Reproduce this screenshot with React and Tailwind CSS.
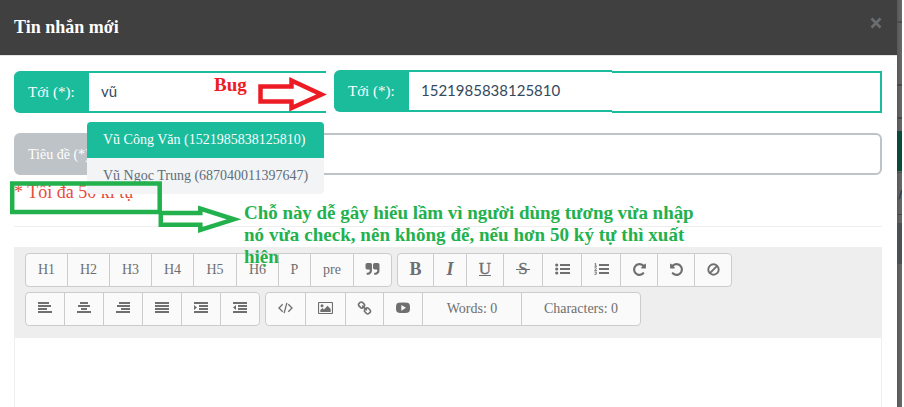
import React from "react";

const serif = "font-['Liberation_Serif',serif]";

const REPEAT =
  "M1664 256v448q0 26-19 45t-45 19h-448q-42 0-59-40-17-39 14-69l138-138q-148-137-349-137-104 0-198.5 40.5t-163.5 109.5-109.5 163.5-40.5 198.5 40.5 198.5 109.5 163.5 163.5 109.5 198.5 40.5q119 0 225-52t179-147q7-10 23-12 15 0 25 9l137 138q9 8 9.5 20.5t-7.5 22.5q-109 132-264 204.5t-327 72.5q-156 0-298-61t-245-164-164-245-61-298 61-298 164-245 245-164 298-61q147 0 284.5 55.5t244.5 156.5l130-129q29-31 70-14 39 17 39 59z";
const QUOTE =
  "M832 320v704q0 104-40.500 198.500t-109.500 163.500-163.500 109.500-198.500 40.500h-64q-26 0-45-19t-19-45v-128q0-26 19-45t45-19h64q106 0 181-75t75-181v-32q0-40-28-68t-68-28h-224q-80 0-136-56t-56-136v-384q0-80 56-136t136-56h384q80 0 136 56t56 136zm896 0v704q0 104-40.500 198.500t-109.500 163.500-163.500 109.500-198.500 40.500h-64q-26 0-45-19t-19-45v-128q0-26 19-45t45-19h64q106 0 181-75t75-181v-32q0-40-28-68t-68-28h-224q-80 0-136-56t-56-136v-384q0-80 56-136t136-56h384q80 0 136 56t56 136z";
const LINK =
  "M1520 1216q0-40-28-68l-208-208q-28-28-68-28-42 0-72 32 3 3 19 18.500t21.500 21.500 15 19 13 25.500 3.500 27.500q0 40-28 68t-68 28q-15 0-27.500-3.500t-25.500-13-19-15-21.500-21.500-18.500-19q-33 31-33 73 0 40 28 68l206 207q27 27 68 27 40 0 68-26l147-146q28-28 28-67zm-703-705q0-40-28-68l-206-207q-28-28-68-28-39 0-68 27l-147 146q-28 28-28 67 0 40 28 68l208 208q27 27 68 27 42 0 72-31-3-3-19-18.500t-21.500-21.500-15-19-13-25.500-3.500-27.500q0-40 28-68t68-28q15 0 27.500 3.500t25.500 13 19 15 21.500 21.500 18.500 19q33-31 33-73zm895 705q0 120-85 203l-147 146q-83 83-203 83-121 0-204-85l-206-207q-83-83-83-203 0-123 88-209l-88-88q-86 88-208 88-120 0-204-84l-208-208q-84-84-84-204t85-203l147-146q83-83 203-83 121 0 204 85l206 207q83 83 83 203 0 123-88 209l88 88q86-88 208-88 120 0 204 84l208 208q84 84 84 204z";

function Glyph({ d, flip }) {
  return (
    <svg viewBox="0 0 1792 1792" className={flip ? "size-[15px] -scale-x-100" : "size-[15px]"} fill="currentColor">
      <path d={d} />
    </svg>
  );
}

// Four stacked bars, each given as [x, width] on a 14px grid.
function Bars({ rows, children }) {
  return (
    <svg width="14" height="12" viewBox="0 0 14 12" fill="currentColor">
      {rows.map(([x, w], i) => (
        <rect key={i} x={x} y={i * 3} width={w} height="2" />
      ))}
      {children}
    </svg>
  );
}

function ListIcon({ ordered }) {
  return (
    <svg width="15" height="12" viewBox="0 0 15 12" fill="currentColor">
      {[1, 5, 9].map((y) => (
        <rect key={y} x="5" y={y} width="10" height="2" />
      ))}
      {ordered ? (
        <g fill="none" stroke="currentColor" strokeWidth="0.9">
          <path d="M0.500 0.900L1.700 0.400V3.200M0.400 3.200H3" />
          <path d="M0.500 5Q2.600 4 2.400 5.300Q2 6.300 0.600 7.400H3" />
          <path d="M0.500 9H2.600L1.500 10.100Q3 10.200 2.400 11.200Q1.500 11.800 0.400 11.400" />
        </g>
      ) : (
        [2, 6, 10].map((y) => <circle key={y} cx="1.700" cy={y} r="1.600" />)
      )}
    </svg>
  );
}

const ban = (
  <svg width="13" height="13" viewBox="0 0 13 13" fill="none" stroke="currentColor" strokeWidth="1.900">
    <circle cx="6.500" cy="6.500" r="5.200" />
    <path d="M2.900 10.100L10.100 2.900" />
  </svg>
);

const code = (
  <svg width="15" height="12" viewBox="0 0 15 12" fill="none" stroke="currentColor" strokeWidth="1.300">
    <path d="M4.700 2.300L1 6L4.700 9.700M10.300 2.300L14 6L10.300 9.700M8.900 0.800L6.100 11.200" />
  </svg>
);

const picture = (
  <svg width="15" height="12" viewBox="0 0 15 12">
    <rect x="0.500" y="0.500" width="14" height="11" rx="0.800" fill="none" stroke="currentColor" strokeWidth="1.200" />
    <circle cx="4" cy="3.800" r="1.500" fill="currentColor" />
    <path d="M2.300 9.900V8.100L4.500 6L6 7.400L9.500 3.700L12.700 6.900V9.900Z" fill="currentColor" />
  </svg>
);

const video = (
  <svg width="14" height="12" viewBox="0 0 14 12" fill="currentColor" fillRule="evenodd">
    <path d="M2.500 0.800Q7 0.300 11.500 0.800Q13.500 1 13.800 3Q14.200 6 13.800 8.500Q13.500 10.600 11.500 10.800Q7 11.300 2.500 10.800Q0.500 10.600 0.200 8.500Q-0.200 6 0.200 3Q0.500 1 2.500 0.800ZM5.300 3V8.700L10 5.800Z" />
  </svg>
);

const strike = (
  <span className="relative text-[17px] [-webkit-text-stroke:0.3px]">
    S
    <span className="absolute top-[13px] -left-[2px] h-px w-[14px] bg-current" />
  </span>
);

const row1 = [
  [
    ["w-[43px]", "H1"],
    ["w-[43px]", "H2"],
    ["w-[43px]", "H3"],
    ["w-[43px]", "H4"],
    ["w-[44px]", "H5"],
    ["w-[43px]", "H6"],
    ["w-[33px]", "P"],
    ["w-[44px]", "pre"],
    ["w-[39px]", <Glyph d={QUOTE} />],
  ],
  [
    ["w-[37px]", <b className="text-[18px]">B</b>],
    ["w-[34px]", <b className="text-[18px] italic">I</b>],
    ["w-[38px]", <span className="border-b border-current text-[17px] leading-[13px] [-webkit-text-stroke:0.3px]">U</span>],
    ["w-[40px]", strike],
    ["w-[40px]", <ListIcon />],
    ["w-[40px]", <ListIcon ordered />],
    ["w-[38px]", <Glyph d={REPEAT} />],
    ["w-[38px]", <Glyph d={REPEAT} flip />],
    ["w-[38px]", ban],
  ],
];

const row2 = [
  [
    ["w-[40px]", <Bars rows={[[0, 11], [0, 13], [0, 9], [0, 14]]} />],
    ["w-[40px]", <Bars rows={[[3, 8], [1, 12], [4, 6], [0, 14]]} />],
    ["w-[40px]", <Bars rows={[[3, 11], [1, 13], [5, 9], [0, 14]]} />],
    ["w-[40px]", <Bars rows={[[0, 14], [0, 14], [0, 14], [0, 14]]} />],
    ["w-[40px]", <Bars rows={[[0, 14], [5, 9], [5, 9], [0, 14]]}><path d="M0 3V8L3 5.500Z" /></Bars>],
    ["w-[40px]", <Bars rows={[[0, 14], [5, 9], [5, 9], [0, 14]]}><path d="M3 3V8L0 5.500Z" /></Bars>],
  ],
  [
    ["w-[41px]", code],
    ["w-[41px]", picture],
    ["w-[39px]", <Glyph d={LINK} />],
    ["w-[40px]", video],
    ["w-[100px]", "Words: 0"],
    ["w-[120px]", "Characters: 0"],
  ],
];

function ToolRow({ groups }) {
  return (
    <div className="flex gap-[5px]">
      {groups.map((group, g) => (
        <div key={g} className="flex">
          {group.map(([width, content], i) => (
            <button
              key={i}
              className={`${width} flex h-[34px] shrink-0 items-center justify-center border border-[#ccc] bg-[#fafafa] pb-[2px] whitespace-nowrap text-[#6f6f6f] not-first:-ml-px first:rounded-l last:rounded-r`}
            >
              {content}
            </button>
          ))}
        </div>
      ))}
    </div>
  );
}

function Label({ children, className }) {
  return (
    <span className={`${className} flex w-[75px] shrink-0 items-center rounded-l-md whitespace-nowrap text-white`}>
      {children}
    </span>
  );
}

export default function App() {
  return (
    <div className={`${serif} relative flex h-[407px] w-[904px] overflow-hidden bg-white text-[14px]`}>
      <div className="flex w-[897px] shrink-0 flex-col">
        <header className="flex h-[55px] shrink-0 items-center justify-between bg-[#404040] pr-[15px] pl-[14px]">
          <h1 className="text-[18px] font-bold text-white">Tin nhắn mới</h1>
          <svg width="12" height="12" viewBox="0 0 12 12" className="mb-[9px]" stroke="#6b6e70" strokeWidth="2.600">
            <path d="M1.500 1.500L10.500 10.500M10.500 1.500L1.500 10.500" />
          </svg>
        </header>
        <main className="flex flex-1 flex-col border-t border-[#e5e5e5] pr-[15px] pl-[14px]">
          <div className="mt-[15px] flex h-[42px] shrink-0 font-['Lato',sans-serif] text-[15px] text-[#34495e]">
            <div className="flex w-[312px] rounded-l-md border-y-2 border-[#1abc9c] bg-[#1abc9c]">
              <Label className="bg-[#1abc9c] pl-[14px] font-['Liberation_Serif',serif]">Tới (*):</Label>
              <span className="flex flex-1 items-center bg-white pb-px pl-[12px]">vũ</span>
            </div>
            <div className="mb-px -mt-px ml-2 flex w-[278px] rounded-l-md border-y-2 border-[#1abc9c] bg-[#1abc9c]">
              <Label className="bg-[#1abc9c] pl-[14px] font-['Liberation_Serif',serif]">Tới (*):</Label>
              <span className="flex flex-1 items-center bg-white pb-px pl-[12px]">1521985838125810</span>
            </div>
            <div className="flex-1 border-2 border-l-0 border-[#1abc9c]" />
          </div>
          <div className="mt-[20px] flex h-[42px] shrink-0 rounded-md border-2 border-[#bdc3c7]">
            <Label className="-my-px -ml-px bg-[#bdc3c7] pl-[13px]">Tiêu đề (*):</Label>
          </div>
          <p className="mt-[7px] h-5 shrink-0 text-[18px] leading-5 text-[#e74c3c]">* Tối đa 50 kí tự</p>
          <hr className="mt-[24px] shrink-0 border-[#eee]" />
          <section className="mt-[20px] flex flex-1 flex-col">
            <div className="flex h-[91px] flex-col gap-[5px] bg-[#eee] pt-[6px] pl-[11px]">
              <ToolRow groups={row1} />
              <ToolRow groups={row2} />
            </div>
            <div className="flex-1 border-x border-[#eee]" />
          </section>
        </main>
      </div>

      {/* Dimmed page visible beside the dialog */}
      <aside className="flex w-[5px] flex-col bg-linear-to-r from-[#585858] to-[#6a6a6a]">
        <div className="h-[23px] border-b-2 border-[#4d4d4d]" />
        <div className="h-[63px] border-b-2 border-[#484848]" />
        <div className="h-[33px] border-b-2 border-[#484848]" />
        <div className="mt-[12px] h-[40px] bg-[#0b4a3a]" />
        <div className="mt-px h-px bg-[#505050]" />
        <svg width="5" height="42" viewBox="0 0 5 42" className="shrink-0" fill="none">
          <path d="M4.800 17L2.200 26" stroke="#2f4058" strokeWidth="1.500" />
          <path d="M0 26.500H1" stroke="#3f5560" />
          <path d="M0 41.500H5" stroke="#484848" />
        </svg>
        <div className="mt-[8px] h-[41px] bg-[#4d5052]" />
      </aside>

      {/* Autocomplete menu */}
      <ul className="absolute top-[122px] left-[87px] w-[237px] overflow-hidden rounded bg-[#f3f4f5] whitespace-nowrap">
        <li className="h-9 bg-[#1abc9c] pl-4 leading-[35px] text-white">Vũ Công Văn (1521985838125810)</li>
        <li className="h-9 pl-4 leading-[35px] text-[#606d7a]">Vũ Ngọc Trung (687040011397647)</li>
      </ul>

      {/* Reviewer's marks */}
      <svg className="absolute inset-0" width="904" height="407" fill="none" strokeWidth="4.500">
        <path d="M260.500 86.500H291.500V80.500L321.500 94.500L291.500 108V101.500H260.500Z" stroke="#ed1c24" />
        <rect x="12.200" y="183.500" width="147.500" height="28.500" stroke="#22b14c" />
        <path d="M160.800 213H200.300V208.500L234 219.300L200.300 230V224.700H160.800Z" stroke="#22b14c" />
      </svg>
      <b className="absolute top-[74px] left-[214px] text-[19px] leading-[22px] text-[#ed1c24]">Bug</b>
      <p className="absolute top-[202px] left-[244px] text-[19px] leading-[22px] font-bold whitespace-nowrap text-[#22b14c]">
        <span className="tracking-[-0.04px]">Chỗ này dễ gây hiểu lầm vì người dùng tương vừa nhập</span>
        <br />
        <span className="tracking-[0.03px]">nó vừa check, nên không để, nếu hơn 50 ký tự thì xuất</span>
        <br />
        hiện
      </p>
    </div>
  );
}
